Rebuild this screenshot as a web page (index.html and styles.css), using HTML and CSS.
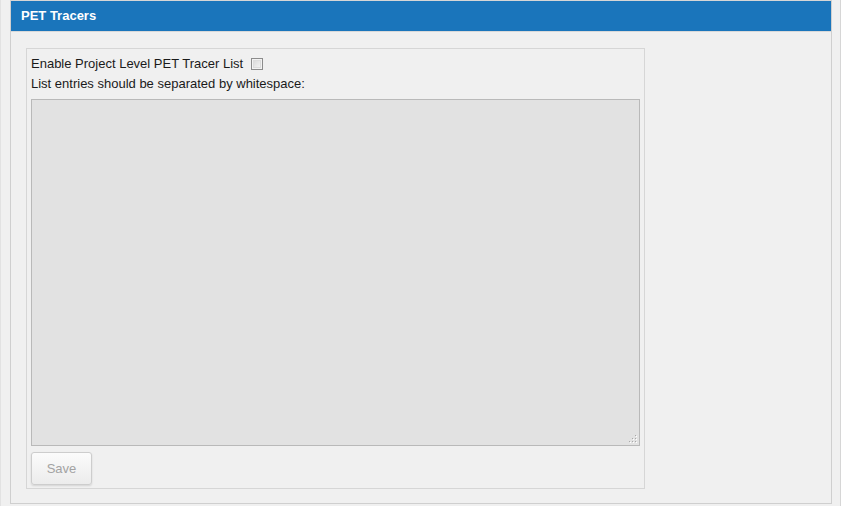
FILE: index.html
```html
<!DOCTYPE html>
<html>
<head>
<meta charset="utf-8">
<link rel="stylesheet" href="styles.css">
</head>
<body>
<div class="page">
  <div class="panel">
    <div class="panel-header">PET Tracers</div>
    <div class="panel-body">
      <div class="tracer-box">
        <label class="line enable">Enable Project Level PET Tracer List <input type="checkbox" class="check" disabled></label>
        <div class="line">List entries should be separated by whitespace:</div>
        <div class="tracers-wrap">
          <textarea class="tracers" disabled></textarea>
          <svg class="grip" width="9" height="9" viewBox="0 0 9 9">
            <g fill="#ffffff">
              <rect x="7" y="1" width="1" height="1"/>
              <rect x="4" y="4" width="1" height="1"/><rect x="7" y="4" width="1" height="1"/>
              <rect x="1" y="7" width="1" height="1"/><rect x="4" y="7" width="1" height="1"/><rect x="7" y="7" width="1" height="1"/>
            </g>
            <g fill="#a8a8a8">
              <rect x="6" y="0" width="1" height="1"/>
              <rect x="3" y="3" width="1" height="1"/><rect x="6" y="3" width="1" height="1"/>
              <rect x="0" y="6" width="1" height="1"/><rect x="3" y="6" width="1" height="1"/><rect x="6" y="6" width="1" height="1"/>
            </g>
          </svg>
        </div>
        <button class="save" disabled>Save</button>
      </div>
    </div>
  </div>
</div>
</body>
</html>
```

FILE: styles.css
```css
html, body {
  margin: 0;
  padding: 0;
  background: #f0f0f0;
  font-family: "Liberation Sans", Arial, sans-serif;
  font-size: 13px;
  color: #1a1a1a;
}

.page {
  width: 841px;
  height: 506px;
  box-sizing: border-box;
  border-left: 1px solid #e2e2e2;
  border-right: 1px solid #d6d6d6;
  padding-left: 9px;
  padding-right: 8px;
}

.panel {
  border: 1px solid #cfcfcf;
  border-top-color: #d6d6d6;
  height: 504px;
  box-sizing: border-box;
  display: flex;
  flex-direction: column;
}

.panel-header {
  background: #1a75bb;
  color: #fff;
  font-weight: bold;
  font-size: 13px;
  height: 30px;
  line-height: 30px;
  padding-left: 10px;
  border-bottom: 1px solid #d9d9d9;
}

.panel-body {
  padding: 16px 15px 0 15px;
  display: flex;
  align-items: flex-start;
}

.tracer-box {
  width: 619px;
  box-sizing: border-box;
  border: 1px solid #d6d6d6;
  padding: 4px 4px 3px 4px;
  display: flex;
  flex-direction: column;
  align-items: flex-start;
}

.line {
  line-height: 20px;
  height: 20px;
  display: flex;
  align-items: center;
}

.enable {
  margin-top: 1px;
}

.check {
  width: 12px;
  height: 12px;
  margin: 0 0 0 8px;
  appearance: none;
  border: 1px solid #8c8c8c;
  background: linear-gradient(135deg, #d4d4d4, #f8f8f8);
  box-shadow: inset 0 0 0 1px #f2f2f2, inset 0 0 0 2px #dcdcdc;
}

.tracers-wrap {
  margin-top: 5px;
  position: relative;
  width: 609px;
  height: 347px;
}

.tracers {
  display: block;
  width: 100%;
  height: 100%;
  box-sizing: border-box;
  margin: 0;
  background: #e2e2e2;
  border: 1px solid #b9b9b9;
  resize: none;
  font-family: inherit;
}

.grip {
  position: absolute;
  right: 2px;
  bottom: 2px;
}

.save {
  margin-top: 6px;
  width: 61px;
  height: 33px;
  font-family: inherit;
  font-size: 13px;
  color: #a3a3a3;
  background: linear-gradient(#fbfbfb, #ececec);
  border: 1px solid #cdcdcd;
  border-radius: 3px;
  box-shadow: 0 1px 2px rgba(0, 0, 0, 0.12);
}
```
